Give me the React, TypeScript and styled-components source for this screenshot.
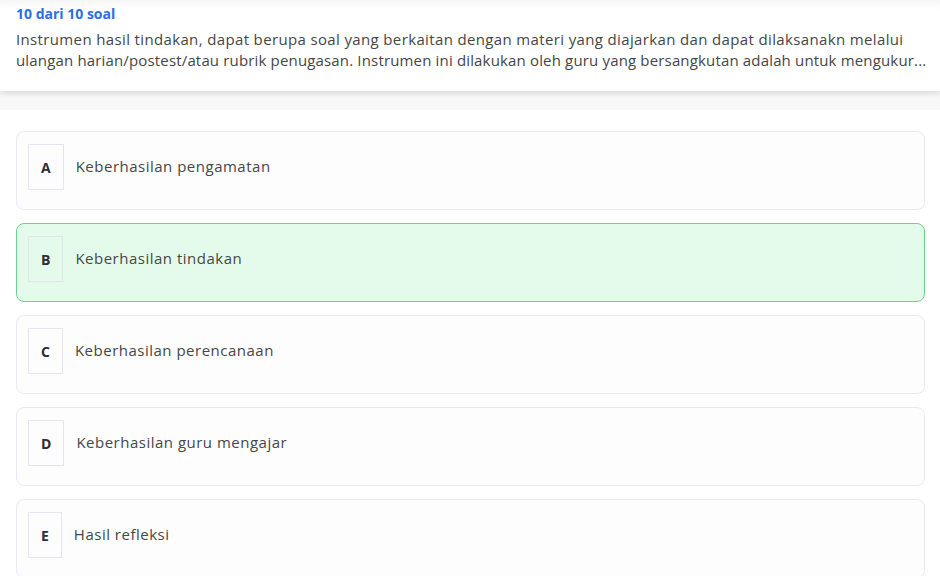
import React from "react";
import styled, { createGlobalStyle } from "styled-components";

const Global = createGlobalStyle`
  html, body { margin: 0; padding: 0; background: #ffffff; }
  body { font-family: "Open Sans", "Noto Sans", sans-serif; -webkit-font-smoothing: antialiased; }
  * { box-sizing: border-box; }
`;

const Page = styled.div`
  width: 940px;
  min-height: 576px;
  overflow: hidden;
  background: #ffffff;
`;

const Header = styled.header`
  background: #ffffff;
  height: 91px;
  padding: 4px 16px 0 16px;
  box-shadow: 0 2px 6px rgba(0, 0, 0, 0.13), inset 0 8px 8px -6px rgba(0, 0, 0, 0.06);
  position: relative;
  z-index: 1;
`;

const Counter = styled.div`
  color: #2b6ee8;
  font-weight: 700;
  font-size: 14px;
  line-height: 20px;
`;

const Question = styled.p`
  margin: 5px 0 0 0;
  color: #464646;
  font-size: 15px;
  line-height: 21px;
`;

const Line = styled.span<{ $spacing: number }>`
  display: block;
  white-space: nowrap;
  letter-spacing: ${(p) => p.$spacing}px;
`;

const Strip = styled.div`
  height: 19px;
  background: #f7f7f7;
`;

const Options = styled.div`
  display: flex;
  flex-direction: column;
  gap: 13px;
  padding: 21px 15px 0 16px;
`;

const Card = styled.div<{ $selected?: boolean }>`
  display: flex;
  align-items: flex-start;
  min-height: 79px;
  padding: 12px 11px;
  border-radius: 8px;
  border: 1px solid ${(p) => (p.$selected ? "#6ad38f" : "#e7ebf1")};
  background: ${(p) => (p.$selected ? "#e4fbec" : "#fdfdfe")};
`;

const Row = styled.div`
  display: flex;
  align-items: center;
  gap: 12px;
`;

const Letter = styled.div`
  display: flex;
  align-items: center;
  justify-content: center;
  height: 46px;
  padding: 0 12px;
  border: 1px solid #e3e7ed;
  color: #2d2d33;
  font-weight: 700;
  font-size: 14px;
`;

const Label = styled.span`
  color: #474747;
  font-size: 15px;
  letter-spacing: 0.5px;
  margin-top: -2px;
`;

const options = [
  { k: "A", t: "Keberhasilan pengamatan" },
  { k: "B", t: "Keberhasilan tindakan", selected: true },
  { k: "C", t: "Keberhasilan perencanaan" },
  { k: "D", t: "Keberhasilan guru mengajar" },
  { k: "E", t: "Hasil refleksi" },
];

export default function App() {
  return (
    <Page>
      <Global />
      <Header>
        <Counter>10 dari 10 soal</Counter>
        <Question>
          <Line $spacing={0.36}>
            Instrumen hasil tindakan, dapat berupa soal yang berkaitan dengan materi yang diajarkan dan dapat dilaksanakn melalui
          </Line>
          <Line $spacing={0.16}>
            ulangan harian/postest/atau rubrik penugasan. Instrumen ini dilakukan oleh guru yang bersangkutan adalah untuk mengukur...
          </Line>
        </Question>
      </Header>
      <Strip />
      <Options>
        {options.map((o) => (
          <Card key={o.k} $selected={o.selected}>
            <Row>
              <Letter>{o.k}</Letter>
              <Label>{o.t}</Label>
            </Row>
          </Card>
        ))}
      </Options>
    </Page>
  );
}
